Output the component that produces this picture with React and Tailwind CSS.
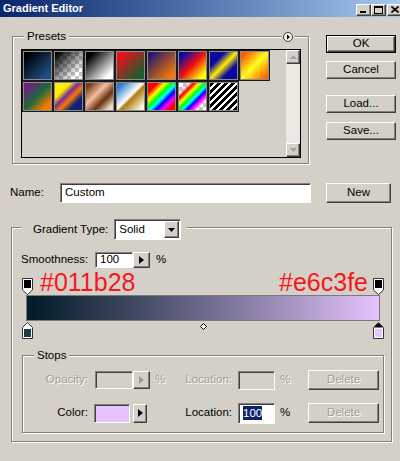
import React from 'react'

const raised = 'bg-[#d4d0c8] border border-t-white border-l-white border-r-[#404040] border-b-[#404040] shadow-[inset_-1px_-1px_0_#808080]'
const sunken = 'border border-t-[#808080] border-l-[#808080] border-r-white border-b-white shadow-[inset_1px_1px_0_#404040]'
const etched = 'border border-[#808080] shadow-[inset_1px_1px_0_#fff,1px_1px_0_#fff]'
const dis = 'text-[#a09d96] [text-shadow:1px_1px_0_#fff]'

const SWATCHES = [
  '[background:linear-gradient(135deg,#000_12%,#1f4f86_88%)]',
  '[background:linear-gradient(135deg,#000_5%,transparent_80%),repeating-conic-gradient(#c4c4c4_0_25%,#fff_0_50%)_0_0/8px_8px]',
  '[background:linear-gradient(135deg,#000_15%,#fff_85%)]',
  '[background:linear-gradient(135deg,#e8101c_15%,#1b5e2a_85%)]',
  '[background:linear-gradient(135deg,#241a6e_10%,#ff7a00_90%)]',
  '[background:linear-gradient(135deg,#0a0aa8_12%,#f01010_50%,#ffff00_88%)]',
  '[background:linear-gradient(135deg,#0a0aa0_28%,#ffee00_50%,#0a0aa0_72%)]',
  '[background:linear-gradient(135deg,#ff5a00_10%,#ffff20_50%,#ff5a00_95%)]',
  '[background:linear-gradient(135deg,#7a1a8a_10%,#1a6a3a_50%,#ff7a00_85%)]',
  '[background:linear-gradient(135deg,#ffee00_28%,#7a2a9a_44%,#ff7a00_58%,#10207a_76%)]',
  '[background:linear-gradient(135deg,#7a3a18_10%,#f0c0a0_40%,#6a3010_65%,#f0dccc_90%)]',
  '[background:linear-gradient(135deg,#2a7ad0_10%,#ffffff_48%,#b07a10_56%,#fff8e0_92%)]',
  '[background:linear-gradient(135deg,#ff0000_18%,#ffff00_32%,#00ff00_44%,#00ffff_54%,#0000ff_64%,#ff00ff_76%,#ff0000_88%)]',
  '[background:linear-gradient(135deg,transparent_18%,#ff0000_28%,#ffff00_38%,#00ff00_48%,#00ffff_56%,#0000ff_64%,#ff00ff_72%,transparent_84%),repeating-conic-gradient(#c4c4c4_0_25%,#fff_0_50%)_0_0/8px_8px]',
  '[background:repeating-linear-gradient(135deg,#000_0_3px,#fff_3px_5px)]',
]

const TriRight = ({ c = '#000' }) => <svg width="5" height="8"><path d="M0 0 L5 4 L0 8Z" fill={c}/></svg>

const TopStop = () => (
  <svg width="11" height="17" className="block">
    <path d="M0.5 0.5 H10.5 V12 L5.5 16.5 L0.5 12 Z" fill="#fff" stroke="#333"/>
    <rect x="2" y="2" width="7" height="8" fill="#000"/>
  </svg>
)

const BottomStop = ({ color, selected }) => (
  <svg width="11" height="17" className="block">
    <path d="M5.5 0.5 L10.5 5.5 V16.5 H0.5 V5.5 Z" fill="#fff" stroke="#333"/>
    {selected && <path d="M5.5 1 L10 5.5 H1 Z" fill="#000"/>}
    <rect x="2" y="7" width="7" height="8" fill={color}/>
  </svg>
)

function TitleBar() {
  return (
    <div className="h-[17px] flex items-center bg-linear-to-r from-[#0a246a] to-[#a6caf0]">
      <span className="pl-[3px] text-[11px] font-bold text-white">Gradient Editor</span>
      <div className="ml-auto -mr-[2px] mt-[2px] flex">
        <div className={`w-[15px] h-[12px] flex items-end pl-[3px] pb-[2px] ${raised}`}><div className="w-[6px] h-[2px] bg-black"/></div>
        <div className={`w-[15px] h-[12px] flex items-center justify-center ${raised}`}>
          <div className="w-[9px] h-[8px] border border-black border-t-2"/>
        </div>
        <div className={`ml-[1px] w-[15px] h-[12px] flex items-center justify-center ${raised}`}>
          <svg width="8" height="7"><path d="M0.5 0.5 L7.5 6.5 M7.5 0.5 L0.5 6.5" stroke="#000" strokeWidth="1.6"/></svg>
        </div>
      </div>
    </div>
  )
}

const Btn = ({ children, className = '', disabled }) => (
  <div className={`flex items-center justify-center ${raised} ${disabled ? dis : ''} ${className}`}>{children}</div>
)

export default function App() {
  return (
    <div className="w-[400px] h-[461px] overflow-hidden bg-[#d4d0c8] text-[11.5px] text-black [font-family:'Liberation_Sans',Arial,sans-serif]">
      <TitleBar/>

      <div className="flex">
        <div className={`relative ml-[12px] mt-[19px] w-[297px] h-[128px] pt-[12px] pl-[8px] ${etched}`}>
          <span className="absolute -top-[8px] left-[11px] px-[3px] leading-[14px] bg-[#d4d0c8]">Presets</span>
          <div className="absolute left-[268px] -top-[5px] px-[2px] bg-[#d4d0c8]">
            <svg width="10" height="10" className="block">
              <circle cx="5" cy="5" r="4.5" fill="#f4f3ef" stroke="#404040"/>
              <path d="M4 2.5 L7 5 L4 7.5Z" fill="#000"/>
            </svg>
          </div>
          <div className="w-[280px] h-[109px] flex border border-black">
            <div className="w-[248px] flex flex-wrap content-start">
              {SWATCHES.map((s, i) => (
                <div key={i} className="w-[31px] h-[31px] border border-[#1a1a1a]">
                  <div className={`h-full border border-[#8c8c8c] ${s}`}/>
                </div>
              ))}
            </div>
            <div className="ml-auto w-[14px] h-full flex flex-col bg-[#ebe9e4]">
              <div className={`h-[14px] flex items-center justify-center ${raised}`}>
                <svg width="7" height="4"><path d="M3.5 0 L7 4 H0Z" fill="#a0a0a0"/></svg>
              </div>
              <div className="flex-1"/>
              <div className={`h-[14px] flex items-center justify-center ${raised}`}>
                <svg width="7" height="4"><path d="M0 0 H7 L3.5 4Z" fill="#a0a0a0"/></svg>
              </div>
            </div>
          </div>
        </div>

        <div className="ml-[17px] mt-[18px] w-[70px] flex flex-col">
          <div className="h-[18px] border border-black flex">
            <Btn className="flex-1">OK</Btn>
          </div>
          <Btn className="mt-[8px] h-[18px]">Cancel</Btn>
          <Btn className="mt-[16px] h-[18px]">Load...</Btn>
          <Btn className="mt-[9px] h-[18px]">Save...</Btn>
        </div>
      </div>

      <div className="mt-[19px] h-[20px] flex items-center pl-[10px]">
        <span className="w-[50px]">Name:</span>
        <div className={`w-[251px] h-[20px] bg-white flex items-center pl-[4px] ${sunken}`}>Custom</div>
        <Btn className="ml-[15px] w-[65px] h-[20px]">New</Btn>
      </div>

      <div className={`relative mt-[24px] ml-[11px] w-[381px] h-[215px] ${etched}`}>
        <div className="absolute left-[9px] -top-[9px] flex items-center gap-[6px] pl-[12px] pr-[6px] bg-[#d4d0c8]">
          <span>Gradient Type:</span>
          <div className={`w-[67px] h-[21px] bg-white flex items-center pl-[4px] ${sunken}`}>
            Solid
            <div className={`ml-auto mr-[1px] w-[15px] h-[17px] flex items-center justify-center ${raised}`}>
              <svg width="7" height="4"><path d="M0 0 H7 L3.5 4Z" fill="#000"/></svg>
            </div>
          </div>
        </div>

        <div className="mt-[24px] h-[16px] flex items-center pl-[9px]">
          <span className="w-[74px]">Smoothness:</span>
          <div className={`w-[38px] h-[16px] bg-white flex items-center pl-[4px] ${sunken}`}>100</div>
          <Btn className="w-[17px] h-[16px]"><TriRight/></Btn>
          <span className="ml-[6px]">%</span>
        </div>

        <div className="ml-[10px] w-[362px]">
          <div className="mt-[2px] h-[25px] flex items-end">
            <TopStop/>
            <span className="ml-[7px] text-[25px] leading-none text-[#f8161c]">#011b28</span>
            <span className="ml-auto text-[25px] leading-none text-[#f8161c]">#e6c3fe</span>
            <div className="ml-[5px]"><TopStop/></div>
          </div>
          <div className="mx-[4px] h-[26px] border border-[#7a7a7a] bg-linear-to-r from-[#011b28] to-[#e6c3fe]"/>
          <div className="mt-[1px] h-[17px] flex justify-between">
            <BottomStop color="#1c3a44"/>
            <svg width="7" height="7" className="mt-[1px]"><path d="M3.5 0.5 L6.5 3.5 L3.5 6.5 L0.5 3.5Z" fill="#fff" stroke="#000"/></svg>
            <BottomStop color="#e6c3fe" selected/>
          </div>
        </div>

        <div className={`relative mt-[16px] ml-[10px] w-[362px] h-[78px] ${etched}`}>
          <span className="absolute -top-[8px] left-[11px] px-[3px] leading-[14px] bg-[#d4d0c8]">Stops</span>

          <div className="mt-[14px] h-[20px] flex items-center">
            <span className={`w-[65px] text-right ${dis}`}>Opacity:</span>
            <div className={`ml-[7px] w-[38px] h-[18px] ${sunken}`}/>
            <Btn className="w-[17px] h-[18px]"><TriRight c="#9a9a9a"/></Btn>
            <span className={`ml-[5px] w-[30px] ${dis}`}>%</span>
            <span className={`w-[47px] text-right ${dis}`}>Location:</span>
            <div className={`ml-[6px] w-[37px] h-[19px] ${sunken}`}/>
            <span className={`ml-[5px] w-[28px] ${dis}`}>%</span>
            <Btn disabled className="w-[71px] h-[20px]">Delete</Btn>
          </div>

          <div className="mt-[13px] h-[20px] flex items-center">
            <span className="w-[65px] text-right">Color:</span>
            <div className={`ml-[6px] w-[36px] h-[19px] bg-[#e6c3fe] ${sunken}`}/>
            <Btn className="ml-[3px] w-[14px] h-[19px]"><TriRight/></Btn>
            <span className="w-[38px]"/>
            <span className="w-[47px] text-right">Location:</span>
            <div className={`ml-[6px] w-[37px] h-[21px] bg-white flex items-center pl-[4px] ${sunken}`}>
              <span className="bg-[#0a246a] text-white leading-[14px]">100</span>
            </div>
            <span className="ml-[5px] w-[28px]">%</span>
            <Btn disabled className="w-[71px] h-[20px]">Delete</Btn>
          </div>
        </div>
      </div>
    </div>
  )
}
